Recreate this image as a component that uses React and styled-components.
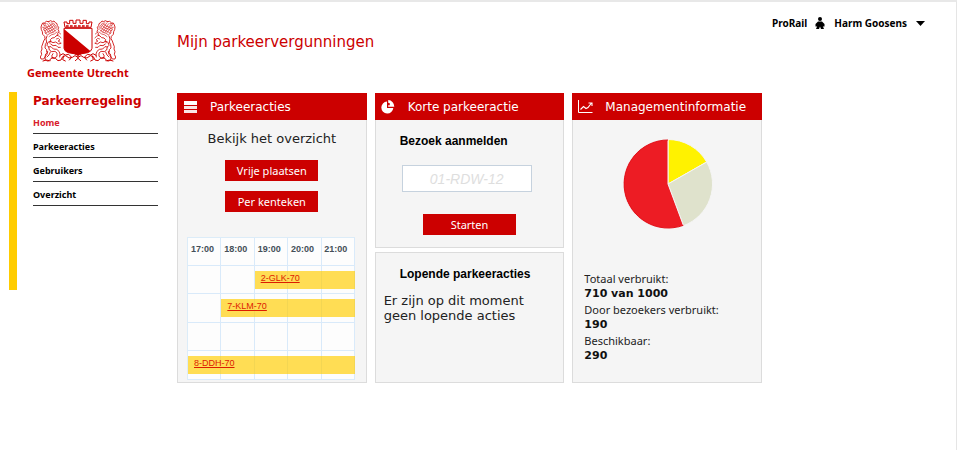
import React from "react";
import styled, { createGlobalStyle } from "styled-components";

const verdana = `Verdana, "DejaVu Sans", sans-serif`;
const arial = `"Liberation Sans", Arial, sans-serif`;
const humanist = `"Noto Sans", "Open Sans", sans-serif`;
const red = "#cc0000";

const GlobalStyle = createGlobalStyle`
  *, *::before, *::after { box-sizing: border-box; }
  body { margin: 0; background: #fff; color: #222; font-family: ${verdana}; }
  h1, h2, h3, p, ul, dl, dd { margin: 0; padding: 0; }
  ul { list-style: none; }
`;

const Page = styled.div`
  min-height: 100vh;
  margin-right: 3px;
  border-top: 2px solid #e8e8e8;
  border-right: 1px solid #e5e5e5;
`;

const TopBar = styled.header`
  display: grid;
  grid-template-columns: 177px 1fr auto;
  height: 91px;
  padding-right: 31px;
`;

const Brand = styled.a`
  display: flex;
  flex-direction: column;
  align-items: center;
  justify-self: start;
  padding: 14px 0 0 27px;
  color: ${red};
  font: bold 11px/14px ${humanist};
  text-decoration: none;
  white-space: nowrap;
`;

const PageTitle = styled.h1`
  padding-top: 30px;
  color: ${red};
  font-size: 15px;
  font-weight: 400;
  line-height: 20px;
`;

const Account = styled.div`
  display: flex;
  align-items: center;
  height: 20px;
  margin-top: 11px;
  color: #000;
  font: bold 10px/20px ${humanist};
`;

const AccountButton = styled.button`
  display: flex;
  align-items: center;
  gap: 9px;
  padding: 0;
  border: 0;
  background: none;
  color: inherit;
  font: inherit;
  cursor: pointer;
`;

const PersonIcon = styled.svg`
  margin: 0 9px 0 8px;
`;

const Layout = styled.div`
  display: grid;
  grid-template-columns: 149px minmax(0, 585px);
  gap: 19px;
  padding-left: 9px;
`;

const Sidebar = styled.nav`
  align-self: start;
  min-height: 198px;
  margin-top: -1px;
  padding-left: 16px;
  border-left: 8px solid #ffcc00;
`;

const SidebarTitle = styled.h2`
  padding-top: 1px;
  color: ${red};
  font-size: 12px;
  line-height: 17px;
`;

const NavItem = styled.li`
  height: 24px;
  border-bottom: 1px solid #333;
`;

const NavLink = styled.a`
  display: block;
  padding-top: 1px;
  color: ${(p) => (p.$active ? "#d8202c" : "#000")};
  font: bold 9px/22px ${humanist};
  line-height: 23px;
  text-decoration: none;
`;

const Cards = styled.main`
  display: grid;
  grid-template-columns: repeat(3, minmax(0, 1fr));
  gap: 8px;
`;

const Stack = styled.div`
  display: flex;
  flex-direction: column;
  gap: 4px;
`;

const Card = styled.section`
  flex: ${(p) => (p.$grow ? 1 : "none")};
  border: 1px solid #dcdcdc;
  background: #f5f5f5;
`;

const CardHeader = styled.h2`
  display: grid;
  grid-template-columns: 27px 1fr;
  align-items: center;
  height: 27px;
  margin: -1px -1px 0;
  padding-left: 6px;
  background: ${red};
  color: #fff;
  font-size: 12px;
  font-weight: 400;
`;

const Intro = styled.p`
  padding: 10px 0 12px;
  font-size: 13px;
  line-height: 18px;
  text-align: center;
`;

const Button = styled.button`
  display: block;
  width: 93px;
  height: 21px;
  margin: 0 auto ${(p) => p.$after}px;
  padding: 0;
  border: 0;
  background: ${red};
  color: #fff;
  font: 11px/21px ${humanist};
  cursor: pointer;
`;

const Schedule = styled.table`
  width: calc(100% - 20px);
  margin: 0 0 2px 9px;
  border-collapse: separate;
  border-spacing: 0;
  table-layout: fixed;
  border-top: 1px solid #dcecf8;
  border-left: 1px solid #dcecf8;
  background: repeating-linear-gradient(
    to right,
    #fdfdfd 0 calc(20% - 1px),
    #d9eafa calc(20% - 1px) 20%
  );
`;

const Hour = styled.th`
  height: 28px;
  padding: 0 0 5px 3px;
  border-bottom: 1px solid #d9eafa;
  color: #444f58;
  font: bold 9px/20px ${arial};
  text-align: left;
`;

const Slot = styled.td`
  height: ${(p) => (p.$tall ? 29 : 28)}px;
  padding: 0;
  border-bottom: 1px solid #d9eafa;
`;

const Booking = styled.a`
  display: block;
  height: 18px;
  padding-left: 6px;
  background: rgba(255, 204, 0, 0.67);
  color: #dd1c00;
  font: 9px/15px ${arial};
`;

const FormTitle = styled.h3`
  padding: 12px 0 0 24px;
  color: #000;
  font: bold 12px/18px ${arial};
`;

const PlateLabel = styled.label`
  display: block;
`;

const PlateInput = styled.input`
  display: block;
  width: 130px;
  height: 27px;
  margin: 15px 0 22px 26px;
  padding: 0;
  border: 1px solid #c6d2de;
  background: #fff;
  font: italic 14px ${arial};
  text-align: center;
  &::placeholder { color: #dedede; opacity: 1; }
`;

const Status = styled.p`
  padding: 10px 8px 0;
  font-size: 13px;
  line-height: 15px;
`;

const Pie = styled.svg`
  display: block;
  margin: 19px auto 41px;
`;

const Stats = styled.dl`
  padding-left: 11px;
`;

const StatLabel = styled.dt`
  padding-top: 1px;
  font: 11px/16px ${humanist};
`;

const StatValue = styled.dd`
  color: #111;
  font-size: 11px;
  font-weight: 700;
  line-height: 14px;
`;

const Lion = () => (
  <g fill="none" stroke={red} strokeWidth="2.500" strokeLinecap="round" strokeLinejoin="round">
    <path d="M35 17l6-3 5 3 5-2 4 5 5 3 1 6 4 5-2 6 3 6-4 6 1 5-6 3-5 5-7 1-5 5 2 5-5 5" />
    <path d="M35 17l-7-1-6 5-5 0-3 6-2 6 1 8 3 6 1 8 6 6 1 7-4 7-3 9-3 8 1 7-3 8 2 8-4 8 2 6 8 0 4-6 2-9 5-4" />
    <path
      d="M22 32l14 18M25 26l17 23M31 23l18 25M37 21l17 24M43 20l15 19M49 21l11 14M24 44l8-5 8-2 8-6M27 51l8-5 9-3 9-7M31 57l8-5 9-3 9-7M24 38l8-6 7-2 7-6M36 62l8-6 8-2 8-6"
      strokeWidth="1.800"
    />
    <path d="M17 34l5 2-2 6 5 3-1 6 5 3M19 26l6 4M20 23l7 0" strokeWidth="2" />
    <path d="M30 60l-3 9 2 9-4 8-1 10 5 5 0 7M38 76l-6 4-2 8 5 5 6-1M40 76l8 4 8-2 9 6 7-2M41 84l7 5 9-1 6 6 7 0" />
    <path d="M35 93l2 9 7 5 10-1 6 5 0 10-7 5-10 0M43 93l6 6 10 1 7 6 3 8-1 9M32 106l-2 9-6 8 1 9 6 3 9-1M40 108l-4 9-6 6M48 113l-4 7 4 6" />
    <path d="M58 69l6-2 5 5-6 3 7 4M60 58l8 3 4 5M65 49l6 5" strokeWidth="2" />
  </g>
);

const CoatOfArms = () => (
  <svg width="82" height="50" viewBox="0 0 246 150" role="img" aria-label="Stadswapen">
    <Lion />
    <g transform="matrix(-1 0 0 1 246 0)"><Lion /></g>
    <path d="M81 37h84v60q-2 10-13 13l-17 3-12 5-12-5-17-3q-11-3-13-13z" fill="#fff" stroke={red} strokeWidth="3" />
    <path d="M81 39l79 66q-4 5-11 6l-14 2-12 5-12-5-17-3q-11-3-13-13z" fill={red} />
    <path
      d="M84 34l-3-16h9v5h8V13h10v9h9V12h12v10h9v-9h10v10h8v-5h9l-3 16z"
      fill="#fff"
      stroke={red}
      strokeWidth="3"
    />
    <path d="M87 30h72" stroke={red} strokeWidth="4" strokeDasharray="8 4" />
    <g fill="none" stroke={red} strokeWidth="3" strokeLinecap="round" strokeLinejoin="round">
      <path d="M18 135l10-3 8 2 9-9 10 2 8 7 9-2 5-10 9-3 10 7 10-2 8-5 9 5 9-5 8 5 10 2 10-7 9 3 5 10 9 2 8-7 10-2 9 9 8-2 10 3" />
      <path d="M69 118l9-5 7 4 10-2 9 9-7 8M177 118l-9-5-7 4-10-2-9 9 7 8M80 120l-3 11 8 4M166 120l3 11-8 4M123 119v8l-8 7M123 127l8 7" />
    </g>
  </svg>
);

const ListIcon = () => (
  <svg width="14" height="14" viewBox="0 0 14 14" fill="#fff" aria-hidden="true">
    <path d="M1 1h13v4H1z" />
    <path d="M1 6h13v3H1zM1 10h13v3H1z" opacity="0.9" />
  </svg>
);

const PieIcon = () => (
  <svg width="14" height="14" viewBox="0 0 14 14" fill="#fff" aria-hidden="true">
    <path d="M6 1.500A6 6 0 1 0 12.300 8H6z" />
    <path d="M7.200 0V2.800L8.800 3.200V5.200H7.200V6.800H13.300A6.500 6.500 0 0 0 7.200 0z" />
  </svg>
);

const TrendIcon = () => (
  <svg width="16" height="14" viewBox="0 0 16 14" fill="none" stroke="#fff" strokeWidth="1" aria-hidden="true">
    <path d="M.5 0V12.500H14.500" />
    <path d="M2.500 9.500L5.500 6.500 8 8.500 10 7.500 13.500 3M10.500 3H14V6" strokeWidth="1.100" />
  </svg>
);

const UsageChart = () => (
  <Pie width="90" height="90" viewBox="-46 -45 90 90" overflow="visible" role="img" aria-label="Verdeling van het verbruik">
    <g stroke="#f5f5f5" strokeWidth="1" strokeLinejoin="round">
      <path d="M0 0V-44.500A44.500 44.500 0 0 1 38.700-22z" fill="#fff200" />
      <path d="M0 0L38.700-22A44.500 44.500 0 0 1 15.500 41.700z" fill="#dfe2cc" />
      <path d="M0 0L15.500 41.700A44.500 44.500 0 1 1 0-44.500z" fill="#ed1c24" />
    </g>
    <path d="M15.300 41.300A44 44 0 1 1 0-44" fill="none" stroke="#e3121b" />
  </Pie>
);

const navItems = ["Home", "Parkeeracties", "Gebruikers", "Overzicht"];
const hours = ["17:00", "18:00", "19:00", "20:00", "21:00"];
const bookings = [
  { start: 2, plate: "2-GLK-70" },
  { start: 1, plate: "7-KLM-70" },
  { start: 5 },
  { start: 0, plate: "8-DDH-70" },
];
const stats = [
  ["Totaal verbruikt:", "710 van 1000"],
  ["Door bezoekers verbruikt:", "190"],
  ["Beschikbaar:", "290"],
];

export default function App() {
  return (
    <>
      <GlobalStyle />
      <Page>
        <TopBar>
          <Brand href="#">
            <CoatOfArms />
            Gemeente Utrecht
          </Brand>
          <PageTitle>Mijn parkeervergunningen</PageTitle>
          <Account>
            ProRail
            <PersonIcon width="10" height="12" viewBox="0 0 10 12" aria-hidden="true">
              <circle cx="5" cy="2" r="2" />
              <path d="M3 4.500h4L9.500 7v2.500H8L7.500 8.500 9 12H6L5 9.500 4 12H1L2.500 8.500 2 9.500H.5V7z" />
            </PersonIcon>
            <AccountButton type="button">
              Harm Goosens
              <svg width="9" height="5" viewBox="0 0 9 5" aria-hidden="true">
                <path d="M0 0h9L4.500 5z" />
              </svg>
            </AccountButton>
          </Account>
        </TopBar>
        <Layout>
          <Sidebar>
            <SidebarTitle>Parkeerregeling</SidebarTitle>
            <ul>
              {navItems.map((item, i) => (
                <NavItem key={item}>
                  <NavLink href="#" $active={i === 0}>{item}</NavLink>
                </NavItem>
              ))}
            </ul>
          </Sidebar>
          <Cards>
            <Card>
              <CardHeader><ListIcon />Parkeeracties</CardHeader>
              <Intro>Bekijk het overzicht</Intro>
              <Button type="button" $after={10}>Vrije plaatsen</Button>
              <Button type="button" $after={25}>Per kenteken</Button>
              <Schedule>
                <thead>
                  <tr>{hours.map((h) => <Hour key={h} scope="col">{h}</Hour>)}</tr>
                </thead>
                <tbody>
                  {bookings.map(({ start, plate }, row) => (
                    <tr key={row}>
                      {hours.slice(0, start).map((h) => <Slot key={h} $tall={row % 2} />)}
                      {plate && (
                        <Slot colSpan={hours.length - start} $tall={row % 2}>
                          <Booking href="#">{plate}</Booking>
                        </Slot>
                      )}
                    </tr>
                  ))}
                </tbody>
              </Schedule>
            </Card>
            <Stack>
              <Card>
                <CardHeader><PieIcon />Korte parkeeractie</CardHeader>
                <FormTitle><PlateLabel htmlFor="plate">Bezoek aanmelden</PlateLabel></FormTitle>
                <PlateInput id="plate" type="text" placeholder="01-RDW-12" />
                <Button type="button" $after={12}>Starten</Button>
              </Card>
              <Card $grow>
                <FormTitle>Lopende parkeeracties</FormTitle>
                <Status>Er zijn op dit moment geen lopende acties</Status>
              </Card>
            </Stack>
            <Card>
              <CardHeader><TrendIcon />Managementinformatie</CardHeader>
              <UsageChart />
              <Stats>
                {stats.map(([label, value]) => (
                  <div key={label}>
                    <StatLabel>{label}</StatLabel>
                    <StatValue>{value}</StatValue>
                  </div>
                ))}
              </Stats>
            </Card>
          </Cards>
        </Layout>
      </Page>
    </>
  );
}
